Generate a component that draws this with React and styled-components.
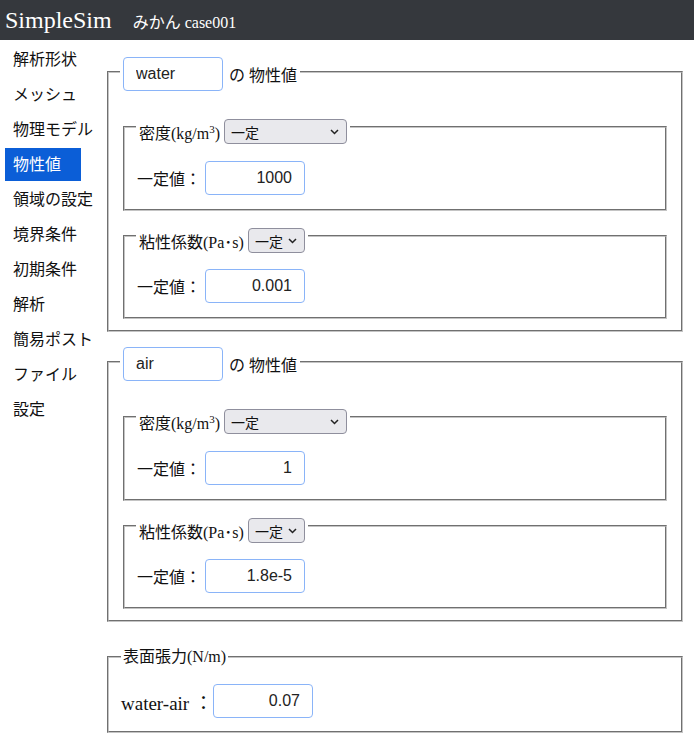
import React from "react";
import styled, { createGlobalStyle } from "styled-components";

const GlobalStyle = createGlobalStyle`
  body {
    margin: 0;
    background: #fff;
    color: #111;
    font-family: "Liberation Serif", "Noto Sans CJK JP", serif;
    font-size: 16px;
  }
`;

const MENU = [
  "解析形状",
  "メッシュ",
  "物理モデル",
  "物性値",
  "領域の設定",
  "境界条件",
  "初期条件",
  "解析",
  "簡易ポスト",
  "ファイル",
  "設定",
];

const FLUIDS = [
  { name: "water", density: "1000", viscosity: "0.001", mt: 0 },
  { name: "air", density: "1", viscosity: "1.8e-5", mt: 11 },
];

const Header = styled.header`
  height: 40px;
  background: #35383d;
  color: #fff;
  display: flex;
  align-items: center;
  padding-left: 5px;
  gap: 21px;
`;

const Brand = styled.span`
  font-size: 24px;
`;

const CaseName = styled.span`
  font-size: 16px;
  padding-top: 2px;
`;

const Body = styled.div`
  display: flex;
  align-items: flex-start;
`;

const Sidebar = styled.nav`
  width: 105px;
  flex-shrink: 0;
  padding-top: 1px;
`;

const MenuItem = styled.div`
  width: fit-content;
  min-width: 48px;
  white-space: nowrap;
  margin: 2px 0 0 5px;
  padding: 5px 20px 5px 8px;
  line-height: 23px;
  color: ${(p) => (p.$active ? "#fff" : "#111")};
  background: ${(p) => (p.$active ? "#0b5ed7" : "transparent")};
`;

const Main = styled.main`
  flex: 1;
  min-width: 0;
  padding: 13px 11px 10px 2px;
  display: flex;
  flex-direction: column;
`;

const Fieldset = styled.fieldset`
  margin: ${(p) => p.$mt || 0}px 0 0 0;
  padding: ${(p) => p.$pt || 0}px ${(p) => p.$px || 14}px ${(p) => p.$pb || 11}px;
  border: 2px groove #c4c4c4;
  min-width: 0;
`;

const Legend = styled.legend`
  padding: 0 3px;
  margin-left: -3px;
`;

const TextLegend = styled.legend`
  padding: 0 2px;
  line-height: 32px;
`;

const LegendRow = styled.div`
  display: flex;
  align-items: center;
  gap: ${(p) => p.$gap || 4}px;
  padding-top: ${(p) => p.$lift || 0}px;
`;

const TextInput = styled.input`
  box-sizing: border-box;
  width: 100px;
  height: 34px;
  border: 1px solid #8ab4f8;
  border-radius: 4px;
  padding: 0 12px;
  font-family: "Liberation Sans", "Noto Sans", sans-serif;
  font-size: 16px;
  color: #222;
  text-align: ${(p) => (p.$right ? "right" : "left")};
  background: #fff;
  outline: none;
`;

const SelectWrap = styled.span`
  position: relative;
  display: inline-flex;
`;

const Select = styled.select`
  appearance: none;
  box-sizing: border-box;
  width: ${(p) => p.$w}px;
  height: 25px;
  border: 1px solid #8f8f9d;
  border-radius: 4px;
  background: #e9e9ed;
  padding: 0 0 0 6px;
  font-family: "Noto Sans CJK JP", sans-serif;
  font-size: 14px;
  color: #111;
`;

const Chevron = styled.svg`
  position: absolute;
  right: 8px;
  top: 10px;
  pointer-events: none;
`;

const Row = styled.div`
  display: flex;
  align-items: center;
  gap: ${(p) => p.$gap ?? 4}px;
  margin-left: ${(p) => p.$ml || 0}px;
  font-size: ${(p) => p.$fs || 16}px;
`;

const Sup = styled.sup`
  font-size: 11px;
`;

const Dropdown = ({ width }) => (
  <SelectWrap>
    <Select $w={width} defaultValue="const">
      <option value="const">一定</option>
    </Select>
    <Chevron width="9" height="6" viewBox="0 0 9 6">
      <path d="M1 1l3.5 3.5L8 1" fill="none" stroke="#222" strokeWidth="1.5" />
    </Chevron>
  </SelectWrap>
);

const PropertyGroup = ({ label, width, value, mt, pt }) => (
  <Fieldset $mt={mt} $pt={pt} $pb={14}>
    <Legend>
      <LegendRow $lift={9}>
        {label}
        <Dropdown width={width} />
      </LegendRow>
    </Legend>
    <Row $ml={-2}>
      <span>一定値：</span>
      <TextInput $right defaultValue={value} />
    </Row>
  </Fieldset>
);

const FluidCard = ({ fluid }) => (
  <Fieldset $mt={fluid.mt} $pt={19} $pb={11}>
    <Legend>
      <LegendRow $lift={4} $gap={6}>
        <TextInput defaultValue={fluid.name} />
        <span>の 物性値</span>
      </LegendRow>
    </Legend>
    <PropertyGroup
      label={
        <span>
          密度(kg/m<Sup>3</Sup>)
        </span>
      }
      width={123}
      value={fluid.density}
      pt={17}
    />
    <PropertyGroup label="粘性係数(Pa･s)" width={57} value={fluid.viscosity} mt={8} pt={16} />
  </Fieldset>
);

export default function App() {
  return (
    <>
      <GlobalStyle />
      <Header>
        <Brand>SimpleSim</Brand>
        <CaseName>みかん case001</CaseName>
      </Header>
      <Body>
        <Sidebar>
          {MENU.map((m) => (
            <MenuItem key={m} $active={m === "物性値"}>
              {m}
            </MenuItem>
          ))}
        </Sidebar>
        <Main>
          {FLUIDS.map((f) => (
            <FluidCard key={f.name} fluid={f} />
          ))}
          <Fieldset $mt={19} $pt={11} $pb={13} $px={12}>
            <TextLegend>表面張力(N/m)</TextLegend>
            <Row $fs={19} $gap={0}>
              <span>water-air ：</span>
              <TextInput $right defaultValue="0.07" />
            </Row>
          </Fieldset>
        </Main>
      </Body>
    </>
  );
}
